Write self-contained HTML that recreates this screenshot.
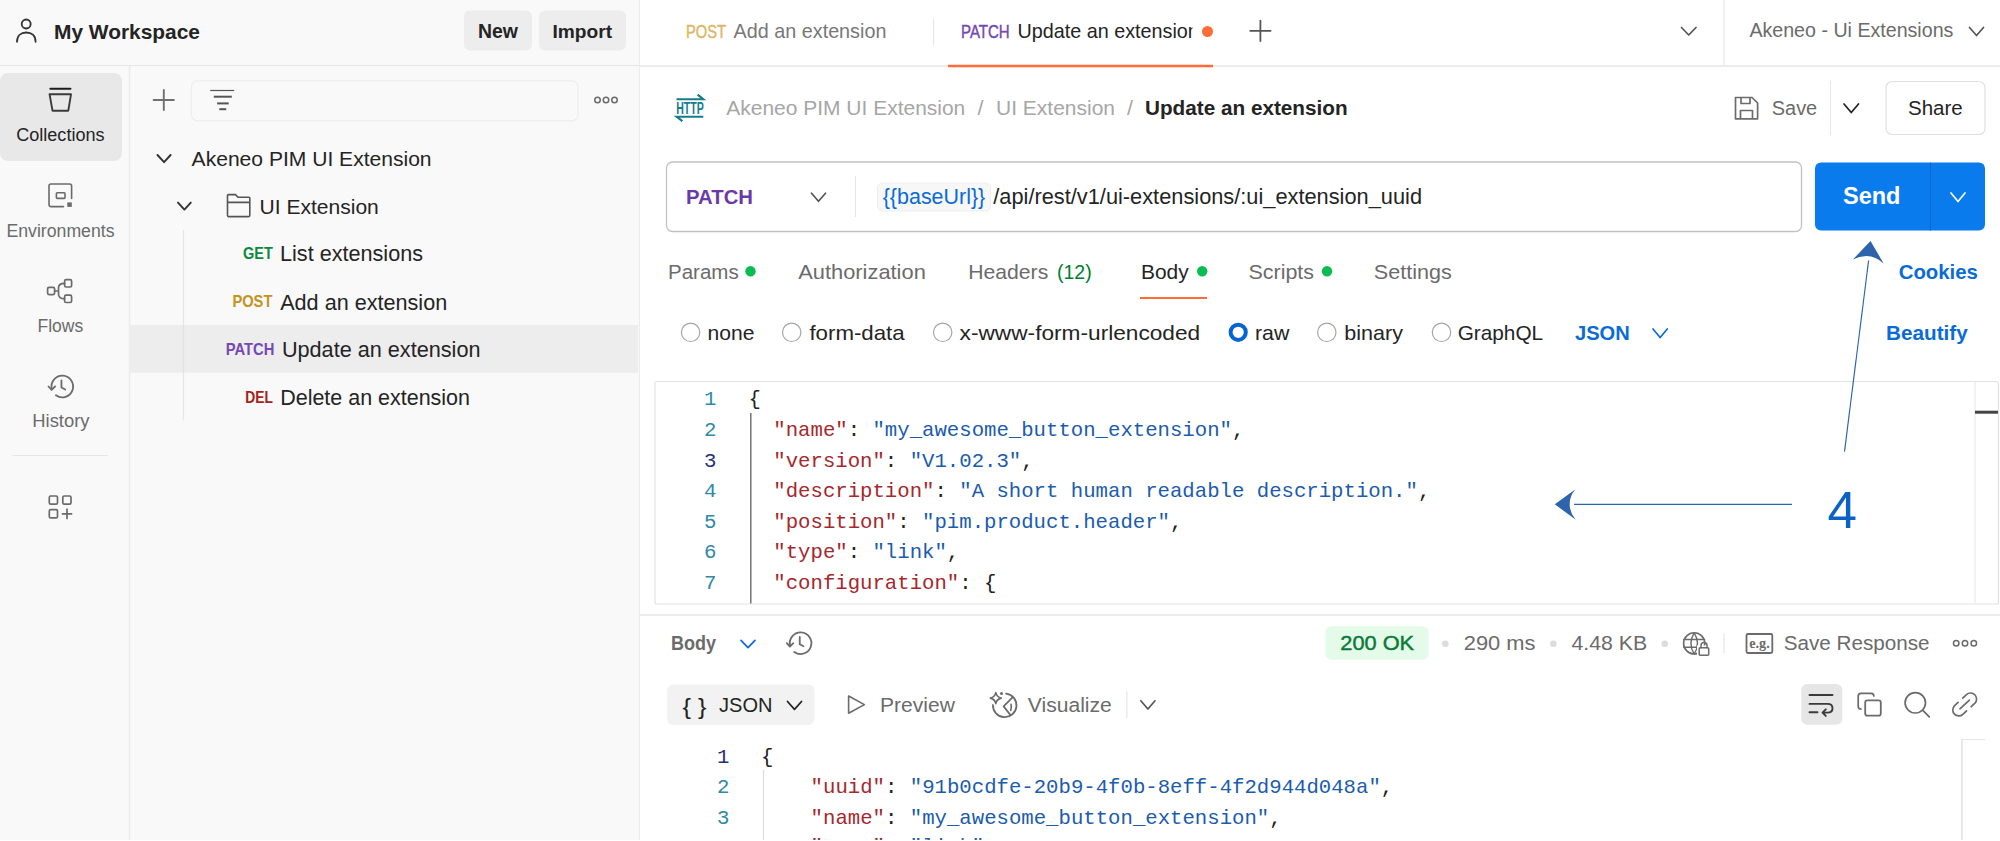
<!DOCTYPE html>
<html><head><meta charset="utf-8"><title>Postman</title><style>html,body{margin:0;padding:0;background:#fff;overflow:hidden;width:2000px;height:841px}svg{display:block;font-family:"Liberation Sans",sans-serif}</style></head><body>
<svg width="2000" height="841" viewBox="0 0 2000 841">
<rect x="0" y="0" width="2000" height="841" rx="0" fill="#ffffff"/>
<rect x="0" y="0" width="639" height="841" rx="0" fill="#f9f9f9"/>
<line x1="639.5" y1="0" x2="639.5" y2="841" stroke="#ececec" stroke-width="1" stroke-linecap="butt"/>
<line x1="0" y1="65.5" x2="639" y2="65.5" stroke="#e6e6e6" stroke-width="1" stroke-linecap="butt"/>
<line x1="640" y1="66" x2="2000" y2="66" stroke="#e6e6e6" stroke-width="1.5" stroke-linecap="butt"/>
<line x1="129.5" y1="66" x2="129.5" y2="841" stroke="#ececec" stroke-width="1.5" stroke-linecap="butt"/>
<circle cx="26.2" cy="24" r="4.5" stroke="#333333" stroke-width="1.8" fill="none"/>
<path d="M17 41.8 C17 35.5 21 32.5 26.2 32.5 C31.5 32.5 35.6 35.5 35.6 41.8" stroke="#333333" stroke-width="1.8" fill="none" stroke-linecap="round" stroke-linejoin="round" />
<text x="54" y="39.4" font-family="Liberation Sans" font-size="20.8" font-weight="700" fill="#242424" textLength="146" lengthAdjust="spacingAndGlyphs" >My Workspace</text>
<rect x="464" y="10.5" width="68" height="40" rx="6" fill="#ededed"/>
<text x="477.9" y="37.9" font-family="Liberation Sans" font-size="19.5" font-weight="700" fill="#242424" textLength="40" lengthAdjust="spacingAndGlyphs" >New</text>
<rect x="539" y="10.5" width="87" height="40" rx="6" fill="#ededed"/>
<text x="552.5" y="37.9" font-family="Liberation Sans" font-size="19" font-weight="700" fill="#242424" textLength="59.5" lengthAdjust="spacingAndGlyphs" >Import</text>
<rect x="0" y="73" width="122" height="88" rx="8" fill="#e8e8e8"/>
<line x1="50.4" y1="88.8" x2="70.4" y2="88.8" stroke="#1c1c1c" stroke-width="2.1" stroke-linecap="round"/>
<path d="M49.6 94.3 L71 94.3 L68.3 110.7 L52.5 110.7 Z" stroke="#3a3a3a" stroke-width="1.9" fill="none" stroke-linecap="round" stroke-linejoin="round" />
<text x="16.2" y="140.8" font-family="Liberation Sans" font-size="18" fill="#242424" textLength="88.4" lengthAdjust="spacingAndGlyphs" >Collections</text>
<path d="M71.6 198.5 L71.6 186 Q71.6 184 69.6 184 L51 184 Q49 184 49 186 L49 204.6 Q49 206.6 51 206.6 L63.5 206.6" stroke="#6b6b6b" stroke-width="1.6" fill="none" stroke-linecap="round" stroke-linejoin="round" />
<rect x="56.4" y="192.8" width="8.6" height="5.6" rx="0.8" fill="none" stroke="#6b6b6b" stroke-width="1.6"/>
<rect x="67.3" y="202.4" width="4.5" height="4.5" rx="0" fill="#6b6b6b"/>
<text x="6.5" y="236.5" font-family="Liberation Sans" font-size="18" fill="#6b6b6b" textLength="108" lengthAdjust="spacingAndGlyphs" >Environments</text>
<rect x="47.6" y="287.3" width="7" height="7.3" rx="1.5" fill="none" stroke="#6b6b6b" stroke-width="1.7"/>
<rect x="64.6" y="279.7" width="7" height="7.3" rx="1.5" fill="none" stroke="#6b6b6b" stroke-width="1.7"/>
<rect x="64.6" y="295.2" width="7" height="7.3" rx="1.5" fill="none" stroke="#6b6b6b" stroke-width="1.7"/>
<path d="M54.6 291 L57 291 M64.6 283.4 Q58.5 283.4 58.5 288 L58.5 294 Q58.5 298.8 64.6 298.8 M56 291 L58.5 291" stroke="#6b6b6b" stroke-width="1.7" fill="none" stroke-linecap="round" stroke-linejoin="round" />
<text x="37.5" y="332" font-family="Liberation Sans" font-size="18" fill="#6b6b6b" textLength="45.8" lengthAdjust="spacingAndGlyphs" >Flows</text>
<path d="M55.95 395.24 A10.8 10.8 0 1 0 51.82 389.11" stroke="#6b6b6b" stroke-width="1.8" fill="none" stroke-linecap="round" stroke-linejoin="round" />
<path d="M48.52 386.51 L51.62 389.91 L55.02 386.51" stroke="#6b6b6b" stroke-width="1.8" fill="none" stroke-linecap="round" stroke-linejoin="round" />
<path d="M61.45 380.30 L61.45 387.50 L65.20 389.50" stroke="#6b6b6b" stroke-width="1.8" fill="none" stroke-linecap="round" stroke-linejoin="round" />
<text x="32.3" y="427.3" font-family="Liberation Sans" font-size="18" fill="#6b6b6b" textLength="57.2" lengthAdjust="spacingAndGlyphs" >History</text>
<line x1="12.5" y1="455.5" x2="108" y2="455.5" stroke="#e6e6e6" stroke-width="1" stroke-linecap="butt"/>
<rect x="49.3" y="496" width="8.2" height="8.2" rx="1.4" fill="none" stroke="#6b6b6b" stroke-width="1.7"/>
<rect x="62.8" y="496" width="8.2" height="8.2" rx="1.4" fill="none" stroke="#6b6b6b" stroke-width="1.7"/>
<rect x="49.3" y="509.6" width="8.2" height="8.2" rx="1.4" fill="none" stroke="#6b6b6b" stroke-width="1.7"/>
<path d="M67 509.2 L67 518.4 M62.4 513.8 L71.6 513.8" stroke="#6b6b6b" stroke-width="1.7" fill="none" stroke-linecap="round" stroke-linejoin="round" />
<path d="M163.8 90 L163.8 110 M153.6 100 L173.9 100" stroke="#707070" stroke-width="1.9" fill="none" stroke-linecap="round" stroke-linejoin="round" />
<rect x="191.5" y="80.8" width="386.5" height="40" rx="6" fill="none" stroke="#ededed" stroke-width="1.2"/>
<line x1="210.2" y1="90.5" x2="234.2" y2="90.5" stroke="#555" stroke-width="1.2" stroke-linecap="butt"/>
<line x1="213.8" y1="96.7" x2="231.8" y2="96.7" stroke="#555" stroke-width="2" stroke-linecap="butt"/>
<line x1="217.1" y1="103.4" x2="228.7" y2="103.4" stroke="#555" stroke-width="2" stroke-linecap="butt"/>
<line x1="219.3" y1="109.2" x2="226.2" y2="109.2" stroke="#555" stroke-width="2" stroke-linecap="butt"/>
<circle cx="597.5" cy="100" r="2.75" stroke="#6b6b6b" stroke-width="1.5" fill="none"/>
<circle cx="606" cy="100" r="2.75" stroke="#6b6b6b" stroke-width="1.5" fill="none"/>
<circle cx="614.5" cy="100" r="2.75" stroke="#6b6b6b" stroke-width="1.5" fill="none"/>
<path d="M157.5 155 L164.05 162.2 L170.6 155" stroke="#333333" stroke-width="1.9" fill="none" stroke-linecap="round" stroke-linejoin="round" />
<text x="191.6" y="166" font-family="Liberation Sans" font-size="21" fill="#242424" textLength="240" lengthAdjust="spacingAndGlyphs" >Akeneo PIM UI Extension</text>
<path d="M178 202.6 L184.4 209.6 L190.8 202.6" stroke="#333333" stroke-width="1.9" fill="none" stroke-linecap="round" stroke-linejoin="round" />
<path d="M227.5 198 L227.5 195.5 Q227.5 194.6 228.5 194.6 L235.5 194.6 L238 197.2 L249 197.2 Q249.8 197.2 249.8 198 L249.8 215.6 Q249.8 216.6 248.8 216.6 L228.5 216.6 Q227.5 216.6 227.5 215.6 Z M227.5 202.4 L249.8 202.4" stroke="#555" stroke-width="1.6" fill="none" stroke-linecap="round" stroke-linejoin="round" />
<text x="259.5" y="213.8" font-family="Liberation Sans" font-size="21" fill="#242424" textLength="119.3" lengthAdjust="spacingAndGlyphs" >UI Extension</text>
<line x1="183.5" y1="230" x2="183.5" y2="420.5" stroke="#e6e6e6" stroke-width="1.2" stroke-linecap="butt"/>
<rect x="129" y="325" width="509" height="47.7" rx="0" fill="#ededed"/>
<line x1="183.5" y1="325" x2="183.5" y2="372.7" stroke="#e2e2e2" stroke-width="1.2" stroke-linecap="butt"/>
<text x="243" y="259" font-family="Liberation Sans" font-size="17" font-weight="700" fill="#0b8a3e" textLength="29.8" lengthAdjust="spacingAndGlyphs" >GET</text>
<text x="280" y="261.4" font-family="Liberation Sans" font-size="21.5" fill="#242424" textLength="143" lengthAdjust="spacingAndGlyphs" >List extensions</text>
<text x="232.4" y="307" font-family="Liberation Sans" font-size="17" font-weight="700" fill="#c4931c" textLength="40" lengthAdjust="spacingAndGlyphs" >POST</text>
<text x="280.2" y="309.6" font-family="Liberation Sans" font-size="21.5" fill="#242424" textLength="167" lengthAdjust="spacingAndGlyphs" >Add an extension</text>
<text x="225.8" y="354.9" font-family="Liberation Sans" font-size="17" font-weight="700" fill="#7548b4" textLength="48.6" lengthAdjust="spacingAndGlyphs" >PATCH</text>
<text x="281.9" y="356.9" font-family="Liberation Sans" font-size="21.5" fill="#242424" textLength="198.6" lengthAdjust="spacingAndGlyphs" >Update an extension</text>
<text x="245.3" y="402.7" font-family="Liberation Sans" font-size="17" font-weight="700" fill="#a3221b" textLength="27.6" lengthAdjust="spacingAndGlyphs" >DEL</text>
<text x="280.2" y="404.5" font-family="Liberation Sans" font-size="21.5" fill="#242424" textLength="189.8" lengthAdjust="spacingAndGlyphs" >Delete an extension</text>
<text x="686" y="37.9" font-family="Liberation Sans" font-size="18.6" stroke="#dcb664" stroke-width="0.45" fill="#dcb664" textLength="40" lengthAdjust="spacingAndGlyphs" >POST</text>
<text x="733.6" y="38" font-family="Liberation Sans" font-size="19.8" fill="#777777" textLength="152.8" lengthAdjust="spacingAndGlyphs" >Add an extension</text>
<line x1="933.6" y1="18.4" x2="933.6" y2="45.6" stroke="#e6e6e6" stroke-width="1" stroke-linecap="butt"/>
<text x="961" y="37.6" font-family="Liberation Sans" font-size="18.6" stroke="#7548b4" stroke-width="0.45" fill="#7548b4" textLength="48.7" lengthAdjust="spacingAndGlyphs" >PATCH</text>
<clipPath id="tabclip"><rect x="1000" y="0" width="192.5" height="60"/></clipPath>
<text x="1017.5" y="37.6" font-family="Liberation Sans" font-size="19.8" fill="#242424" textLength="181.3" lengthAdjust="spacingAndGlyphs" clip-path="url(#tabclip)">Update an extension</text>
<circle cx="1207.5" cy="31.5" r="5.5" fill="#ff6c37"/>
<path d="M1260.4 20.6 L1260.4 41 M1250.2 30.8 L1270.6 30.8" stroke="#555" stroke-width="1.8" fill="none" stroke-linecap="round" stroke-linejoin="round" />
<line x1="948" y1="66" x2="1213" y2="66" stroke="#ff6c37" stroke-width="2.4" stroke-linecap="butt"/>
<path d="M1681.5 27.5 L1688.75 35 L1696 27.5" stroke="#555" stroke-width="1.7" fill="none" stroke-linecap="round" stroke-linejoin="round" />
<line x1="1724" y1="0" x2="1724" y2="65.5" stroke="#e6e6e6" stroke-width="1" stroke-linecap="butt"/>
<text x="1749.4" y="37.3" font-family="Liberation Sans" font-size="19.6" fill="#6b6b6b" textLength="204" lengthAdjust="spacingAndGlyphs" >Akeneo - Ui Extensions</text>
<path d="M1969.5 27.5 L1976.5 35.5 L1983.5 27.5" stroke="#555" stroke-width="1.7" fill="none" stroke-linecap="round" stroke-linejoin="round" />
<path d="M676.5 99.2 L703.3 99.2 L697.6 94.6" stroke="#137d8b" stroke-width="2.1" fill="none" stroke-linejoin="miter"/>
<text x="676.2" y="113.7" font-family="Liberation Sans" font-size="15.6" font-weight="700" fill="#137d8b" textLength="27.6" lengthAdjust="spacingAndGlyphs" >HTTP</text>
<path d="M703.3 116.8 L676.7 116.8 L682.4 121.2" stroke="#137d8b" stroke-width="2.1" fill="none" stroke-linejoin="miter"/>
<text x="726.3" y="114.9" font-family="Liberation Sans" font-size="21" fill="#a6a6a6" textLength="239" lengthAdjust="spacingAndGlyphs" >Akeneo PIM UI Extension</text>
<text x="977.6" y="114.9" font-family="Liberation Sans" font-size="21" fill="#a6a6a6" textLength="6" lengthAdjust="spacingAndGlyphs" >/</text>
<text x="996" y="114.9" font-family="Liberation Sans" font-size="21" fill="#a6a6a6" textLength="119" lengthAdjust="spacingAndGlyphs" >UI Extension</text>
<text x="1127" y="114.9" font-family="Liberation Sans" font-size="21" fill="#a6a6a6" textLength="6" lengthAdjust="spacingAndGlyphs" >/</text>
<text x="1145" y="115" font-family="Liberation Sans" font-size="20.7" font-weight="700" fill="#242424" textLength="202.6" lengthAdjust="spacingAndGlyphs" >Update an extension</text>
<path d="M1735.5 97.5 L1752 97.5 L1757.6 103 L1757.6 118.8 L1735.5 118.8 Z M1741 97.5 L1741 103.5 L1750 103.5 L1750 97.5 M1740.5 118.8 L1740.5 110.5 L1752.5 110.5 L1752.5 118.8" stroke="#6b6b6b" stroke-width="1.7" fill="none" stroke-linecap="round" stroke-linejoin="round" />
<text x="1771.8" y="114.5" font-family="Liberation Sans" font-size="20" fill="#6b6b6b" textLength="45.4" lengthAdjust="spacingAndGlyphs" >Save</text>
<line x1="1830.5" y1="81" x2="1830.5" y2="135" stroke="#e6e6e6" stroke-width="1" stroke-linecap="butt"/>
<path d="M1844 104 L1851.25 112.5 L1858.5 104" stroke="#212121" stroke-width="1.7" fill="none" stroke-linecap="round" stroke-linejoin="round" />
<rect x="1886" y="81.5" width="99" height="53" rx="6" fill="#fff" stroke="#e0e0e0" stroke-width="1.2"/>
<text x="1908" y="114.5" font-family="Liberation Sans" font-size="20.5" fill="#242424" textLength="54.8" lengthAdjust="spacingAndGlyphs" >Share</text>
<rect x="666.5" y="162" width="1135" height="69.5" rx="6" fill="#fff" stroke="#c2c2c2" stroke-width="1.3"/>
<text x="686" y="203.8" font-family="Liberation Sans" font-size="20.3" font-weight="700" fill="#6a3aa8" textLength="67" lengthAdjust="spacingAndGlyphs" >PATCH</text>
<path d="M811.5 193.2 L818.5 201.3 L825.5 193.2" stroke="#555" stroke-width="1.7" fill="none" stroke-linecap="round" stroke-linejoin="round" />
<line x1="855.5" y1="176" x2="855.5" y2="217" stroke="#e6e6e6" stroke-width="1" stroke-linecap="butt"/>
<rect x="877.5" y="183" width="113" height="28" rx="5" fill="#f7f7f7" stroke="#ededed" stroke-width="1"/>
<text x="882.7" y="203.8" font-family="Liberation Sans" font-size="21.5" fill="#0a6bd8" textLength="102.6" lengthAdjust="spacingAndGlyphs" >{{baseUrl}}</text>
<text x="993.3" y="203.8" font-family="Liberation Sans" font-size="21.8" fill="#242424" textLength="428.7" lengthAdjust="spacingAndGlyphs" >/api/rest/v1/ui-extensions/:ui_extension_uuid</text>
<rect x="1815" y="162.6" width="170" height="68" rx="6" fill="#097bed"/>
<line x1="1930.5" y1="162.6" x2="1930.5" y2="230.6" stroke="#0868cc" stroke-width="1" stroke-linecap="butt"/>
<text x="1843" y="204.4" font-family="Liberation Sans" font-size="23.5" font-weight="700" fill="#ffffff" textLength="57.5" lengthAdjust="spacingAndGlyphs" >Send</text>
<path d="M1951 193 L1958.0 201.5 L1965 193" stroke="#ffffff" stroke-width="1.7" fill="none" stroke-linecap="round" stroke-linejoin="round" />
<text x="668" y="278.6" font-family="Liberation Sans" font-size="20.5" fill="#6b6b6b" textLength="70.7" lengthAdjust="spacingAndGlyphs" >Params</text>
<circle cx="750.5" cy="271.2" r="5.2" fill="#0cbb52"/>
<text x="798.2" y="278.6" font-family="Liberation Sans" font-size="21" fill="#6b6b6b" textLength="127.6" lengthAdjust="spacingAndGlyphs" >Authorization</text>
<text x="968.2" y="278.6" font-family="Liberation Sans" font-size="21" fill="#6b6b6b" textLength="80.1" lengthAdjust="spacingAndGlyphs" >Headers</text>
<text x="1057" y="278.6" font-family="Liberation Sans" font-size="20" fill="#007f31" textLength="34.7" lengthAdjust="spacingAndGlyphs" >(12)</text>
<text x="1141" y="278.6" font-family="Liberation Sans" font-size="21" fill="#242424" textLength="47.7" lengthAdjust="spacingAndGlyphs" >Body</text>
<circle cx="1202.2" cy="271.2" r="5.2" fill="#0cbb52"/>
<line x1="1140" y1="298" x2="1207" y2="298" stroke="#ff6c37" stroke-width="2" stroke-linecap="butt"/>
<text x="1248.5" y="278.6" font-family="Liberation Sans" font-size="21" fill="#6b6b6b" textLength="65.5" lengthAdjust="spacingAndGlyphs" >Scripts</text>
<circle cx="1327" cy="271.2" r="5.2" fill="#0cbb52"/>
<text x="1373.8" y="278.6" font-family="Liberation Sans" font-size="21" fill="#6b6b6b" textLength="78" lengthAdjust="spacingAndGlyphs" >Settings</text>
<text x="1898.7" y="278.7" font-family="Liberation Sans" font-size="21" font-weight="700" fill="#0a6bd8" textLength="79.2" lengthAdjust="spacingAndGlyphs" >Cookies</text>
<circle cx="690.6" cy="332.3" r="9.2" stroke="#a6a6a6" stroke-width="1.2" fill="#fff"/>
<circle cx="791.7" cy="332.3" r="9.2" stroke="#a6a6a6" stroke-width="1.2" fill="#fff"/>
<circle cx="942.7" cy="332.3" r="9.2" stroke="#a6a6a6" stroke-width="1.2" fill="#fff"/>
<circle cx="1326.8" cy="332.3" r="9.2" stroke="#a6a6a6" stroke-width="1.2" fill="#fff"/>
<circle cx="1441.5" cy="332.3" r="9.2" stroke="#a6a6a6" stroke-width="1.2" fill="#fff"/>
<circle cx="1238.2" cy="332.3" r="7.6" stroke="#0265d2" stroke-width="4" fill="#fff"/>
<text x="707.6" y="340" font-family="Liberation Sans" font-size="21" fill="#242424" textLength="46.9" lengthAdjust="spacingAndGlyphs" >none</text>
<text x="809.4" y="340" font-family="Liberation Sans" font-size="21" fill="#242424" textLength="95.3" lengthAdjust="spacingAndGlyphs" >form-data</text>
<text x="959.6" y="340" font-family="Liberation Sans" font-size="21" fill="#242424" textLength="240.6" lengthAdjust="spacingAndGlyphs" >x-www-form-urlencoded</text>
<text x="1255" y="340" font-family="Liberation Sans" font-size="21" fill="#242424" textLength="34.4" lengthAdjust="spacingAndGlyphs" >raw</text>
<text x="1344.3" y="340" font-family="Liberation Sans" font-size="21" fill="#242424" textLength="58.7" lengthAdjust="spacingAndGlyphs" >binary</text>
<text x="1457.7" y="340" font-family="Liberation Sans" font-size="21" fill="#242424" textLength="85.4" lengthAdjust="spacingAndGlyphs" >GraphQL</text>
<text x="1575" y="340" font-family="Liberation Sans" font-size="21" font-weight="700" fill="#0a6bd8" textLength="54.8" lengthAdjust="spacingAndGlyphs" >JSON</text>
<path d="M1653 329 L1660.15 337.5 L1667.3 329" stroke="#0a6bd8" stroke-width="1.7" fill="none" stroke-linecap="round" stroke-linejoin="round" />
<text x="1886" y="339.9" font-family="Liberation Sans" font-size="21" font-weight="700" fill="#0a6bd8" textLength="81.7" lengthAdjust="spacingAndGlyphs" >Beautify</text>
<rect x="655" y="381.5" width="1343.5" height="222.5" rx="2" fill="#fff" stroke="#e3e3e3" stroke-width="1.2"/>
<line x1="1975" y1="382" x2="1975" y2="603.5" stroke="#e6e6e6" stroke-width="1" stroke-linecap="butt"/>
<line x1="1975" y1="412.2" x2="1998" y2="412.2" stroke="#444" stroke-width="3" stroke-linecap="butt"/>
<text x="716.5" y="405.3" text-anchor="end" font-family="Liberation Mono" font-size="20.66" fill="#2e8aa6">1</text>
<text x="748.5" y="405.3" font-family="Liberation Mono" font-size="20.66" xml:space="preserve"><tspan fill="#212121">{</tspan></text>
<text x="716.5" y="435.93" text-anchor="end" font-family="Liberation Mono" font-size="20.66" fill="#2e8aa6">2</text>
<text x="748.5" y="435.93" font-family="Liberation Mono" font-size="20.66" xml:space="preserve"><tspan fill="#212121">  </tspan><tspan fill="#a6282d">&quot;name&quot;</tspan><tspan fill="#212121">: </tspan><tspan fill="#1b5cae">&quot;my_awesome_button_extension&quot;</tspan><tspan fill="#212121">,</tspan></text>
<text x="716.5" y="466.56" text-anchor="end" font-family="Liberation Mono" font-size="20.66" fill="#27307a">3</text>
<text x="748.5" y="466.56" font-family="Liberation Mono" font-size="20.66" xml:space="preserve"><tspan fill="#212121">  </tspan><tspan fill="#a6282d">&quot;version&quot;</tspan><tspan fill="#212121">: </tspan><tspan fill="#1b5cae">&quot;V1.02.3&quot;</tspan><tspan fill="#212121">,</tspan></text>
<text x="716.5" y="497.19" text-anchor="end" font-family="Liberation Mono" font-size="20.66" fill="#2e8aa6">4</text>
<text x="748.5" y="497.19" font-family="Liberation Mono" font-size="20.66" xml:space="preserve"><tspan fill="#212121">  </tspan><tspan fill="#a6282d">&quot;description&quot;</tspan><tspan fill="#212121">: </tspan><tspan fill="#1b5cae">&quot;A short human readable description.&quot;</tspan><tspan fill="#212121">,</tspan></text>
<text x="716.5" y="527.82" text-anchor="end" font-family="Liberation Mono" font-size="20.66" fill="#2e8aa6">5</text>
<text x="748.5" y="527.82" font-family="Liberation Mono" font-size="20.66" xml:space="preserve"><tspan fill="#212121">  </tspan><tspan fill="#a6282d">&quot;position&quot;</tspan><tspan fill="#212121">: </tspan><tspan fill="#1b5cae">&quot;pim.product.header&quot;</tspan><tspan fill="#212121">,</tspan></text>
<text x="716.5" y="558.45" text-anchor="end" font-family="Liberation Mono" font-size="20.66" fill="#2e8aa6">6</text>
<text x="748.5" y="558.45" font-family="Liberation Mono" font-size="20.66" xml:space="preserve"><tspan fill="#212121">  </tspan><tspan fill="#a6282d">&quot;type&quot;</tspan><tspan fill="#212121">: </tspan><tspan fill="#1b5cae">&quot;link&quot;</tspan><tspan fill="#212121">,</tspan></text>
<text x="716.5" y="589.08" text-anchor="end" font-family="Liberation Mono" font-size="20.66" fill="#2e8aa6">7</text>
<text x="748.5" y="589.08" font-family="Liberation Mono" font-size="20.66" xml:space="preserve"><tspan fill="#212121">  </tspan><tspan fill="#a6282d">&quot;configuration&quot;</tspan><tspan fill="#212121">: {</tspan></text>
<line x1="750.8" y1="413" x2="750.8" y2="603.5" stroke="#6b6b6b" stroke-width="1.4" stroke-linecap="butt"/>
<line x1="1844.5" y1="451.6" x2="1868.6" y2="260.5" stroke="#2d64ab" stroke-width="1.15" stroke-linecap="butt"/>
<path d="M1870.5 240.9 L1883.6 263.4 Q1876 256.2 1866.4 255.9 Q1859 256.2 1852.9 259.5 Z" fill="#2d64ab"/>
<line x1="1574" y1="504.3" x2="1792" y2="504.3" stroke="#2d64ab" stroke-width="1.15" stroke-linecap="butt"/>
<path d="M1554.8 504.3 L1575.5 489.2 Q1569.5 496 1569.7 504.3 Q1569.5 512 1575.5 519.6 Z" fill="#2d64ab"/>
<text x="1827.5" y="528.2" font-family="Liberation Sans" font-size="51" fill="#0b62c6" textLength="29.5" lengthAdjust="spacingAndGlyphs" >4</text>
<line x1="640" y1="615" x2="2000" y2="615" stroke="#e6e6e6" stroke-width="1.6" stroke-linecap="butt"/>
<text x="671" y="650.4" font-family="Liberation Sans" font-size="19.5" font-weight="700" fill="#6b6b6b" textLength="45" lengthAdjust="spacingAndGlyphs" >Body</text>
<path d="M741 640.3 L748.0 647.6 L755 640.3" stroke="#0a6bd8" stroke-width="1.7" fill="none" stroke-linecap="round" stroke-linejoin="round" />
<path d="M794.25 651.94 A10.8 10.8 0 1 0 790.12 645.81" stroke="#6b6b6b" stroke-width="1.8" fill="none" stroke-linecap="round" stroke-linejoin="round" />
<path d="M786.82 643.21 L789.92 646.61 L793.32 643.21" stroke="#6b6b6b" stroke-width="1.8" fill="none" stroke-linecap="round" stroke-linejoin="round" />
<path d="M799.75 637.00 L799.75 644.20 L803.50 646.20" stroke="#6b6b6b" stroke-width="1.8" fill="none" stroke-linecap="round" stroke-linejoin="round" />
<rect x="1325.4" y="626.3" width="103.1" height="33.4" rx="6" fill="#e5fbea"/>
<text x="1340.3" y="649.9" font-family="Liberation Sans" font-size="20.5" stroke="#0b7a38" stroke-width="0.45" fill="#0b7a38" textLength="73.8" lengthAdjust="spacingAndGlyphs" >200 OK</text>
<circle cx="1445.3" cy="643.7" r="3.3" fill="#dcdcdc"/>
<circle cx="1553.3" cy="643.7" r="3.3" fill="#dcdcdc"/>
<circle cx="1664.7" cy="643.7" r="3.3" fill="#dcdcdc"/>
<text x="1463.75" y="649.9" font-family="Liberation Sans" font-size="20.5" fill="#6b6b6b" textLength="71.75" lengthAdjust="spacingAndGlyphs" >290 ms</text>
<text x="1571.4" y="649.9" font-family="Liberation Sans" font-size="20.5" fill="#6b6b6b" textLength="75.8" lengthAdjust="spacingAndGlyphs" >4.48 KB</text>
<circle cx="1694.2" cy="643.4" r="10.6" stroke="#6b6b6b" stroke-width="1.6" fill="none"/>
<path d="M1694.2 632.8 Q1687.5 643.4 1694.2 654 M1694.2 632.8 Q1700.9 643.4 1694.2 654 M1683.8 639.5 L1704.6 639.5 M1683.8 647.3 L1700 647.3" stroke="#6b6b6b" stroke-width="1.4" fill="none" stroke-linecap="round" stroke-linejoin="round" />
<rect x="1697" y="645.5" width="13.5" height="10" rx="0" fill="#fff"/>
<rect x="1699.2" y="647.8" width="9.5" height="7.4" rx="1" fill="none" stroke="#6b6b6b" stroke-width="1.5"/>
<path d="M1701 647.8 L1701 645.3 Q1701 642.5 1704 642.5 Q1707 642.5 1707 645.3 L1707 647.8" stroke="#6b6b6b" stroke-width="1.5" fill="none" stroke-linecap="round" stroke-linejoin="round" />
<line x1="1724" y1="633.8" x2="1724" y2="653.2" stroke="#e6e6e6" stroke-width="1.3" stroke-linecap="butt"/>
<rect x="1746.5" y="634" width="25.8" height="19" rx="1.5" fill="none" stroke="#6b6b6b" stroke-width="1.8"/>
<text x="1749.2" y="647.6" font-family="Liberation Serif" font-size="14" font-weight="700" fill="#6b6b6b" textLength="20.5" lengthAdjust="spacingAndGlyphs" >e.g.</text>
<text x="1783.7" y="650.25" font-family="Liberation Sans" font-size="20.5" fill="#6b6b6b" textLength="145.8" lengthAdjust="spacingAndGlyphs" >Save Response</text>
<circle cx="1956.2" cy="643.2" r="2.75" stroke="#6b6b6b" stroke-width="1.5" fill="none"/>
<circle cx="1965" cy="643.2" r="2.75" stroke="#6b6b6b" stroke-width="1.5" fill="none"/>
<circle cx="1973.8" cy="643.2" r="2.75" stroke="#6b6b6b" stroke-width="1.5" fill="none"/>
<rect x="667.2" y="684.4" width="147.3" height="40.7" rx="6" fill="#f2f2f2"/>
<text x="682.4" y="713.5" font-family="Liberation Sans" font-size="22" fill="#242424" textLength="24" lengthAdjust="spacingAndGlyphs" >{ }</text>
<text x="719.1" y="711.5" font-family="Liberation Sans" font-size="20.5" fill="#242424" textLength="53.4" lengthAdjust="spacingAndGlyphs" >JSON</text>
<path d="M787.5 701.5 L794.5 709.4 L801.5 701.5" stroke="#212121" stroke-width="1.7" fill="none" stroke-linecap="round" stroke-linejoin="round" />
<path d="M848.6 696 L864.4 704.6 L848.6 713.2 Z" stroke="#6b6b6b" stroke-width="1.6" fill="none" stroke-linecap="round" stroke-linejoin="round" />
<text x="880.1" y="711.5" font-family="Liberation Sans" font-size="20.5" fill="#6b6b6b" textLength="74.8" lengthAdjust="spacingAndGlyphs" >Preview</text>
<path d="M1006.1 693.6 A11.8 11.8 0 1 1 992.9 705" stroke="#6b6b6b" stroke-width="1.75" fill="none" stroke-linecap="round" stroke-linejoin="round" />
<path d="M1012.3 697.7 L1003.6 706.4 L1010.1 714.6" stroke="#6b6b6b" stroke-width="1.75" fill="none" stroke-linecap="round" stroke-linejoin="round" />
<path d="M1011 704.2 Q1011.6 707.2 1010.8 710.4" stroke="#6b6b6b" stroke-width="1.6" fill="none" stroke-linecap="round" stroke-linejoin="round" />
<path d="M995.8 692.6 Q996.8 697.1 1001.2 698.1 Q996.8 699.1 995.8 703.6 Q994.8 699.1 990.4 698.1 Q994.8 697.1 995.8 692.6 Z" stroke="#6b6b6b" stroke-width="1.6" fill="none" stroke-linecap="round" stroke-linejoin="round" />
<circle cx="1001.5" cy="693.6" r="1.5" fill="#6b6b6b"/>
<text x="1027.8" y="711.5" font-family="Liberation Sans" font-size="20.5" fill="#6b6b6b" textLength="84" lengthAdjust="spacingAndGlyphs" >Visualize</text>
<line x1="1126.8" y1="691.2" x2="1126.8" y2="718" stroke="#e6e6e6" stroke-width="1.2" stroke-linecap="butt"/>
<path d="M1140.8 700.8 L1147.9 709 L1155 700.8" stroke="#555" stroke-width="1.7" fill="none" stroke-linecap="round" stroke-linejoin="round" />
<rect x="1801.3" y="683.9" width="41" height="40.8" rx="6" fill="#e6e6e6"/>
<path d="M1809.5 695 L1832.5 695 M1809.5 703.9 L1827.5 703.9 Q1832.5 703.9 1832.5 708.3 Q1832.5 712.6 1827.5 712.6 L1822.8 712.6 M1825.8 709.3 L1822.5 712.6 L1825.8 715.9 M1809.5 712.3 L1817.5 712.3" stroke="#3a3a3a" stroke-width="1.9" fill="none" stroke-linecap="round" stroke-linejoin="round" />
<path d="M1861 709 Q1858.2 709 1858.2 706.2 L1858.2 696.2 Q1858.2 693.4 1861 693.4 L1871 693.4 Q1873.8 693.4 1873.8 696" stroke="#6b6b6b" stroke-width="1.7" fill="none" stroke-linecap="round" stroke-linejoin="round" />
<rect x="1865.2" y="700.3" width="15.6" height="15.4" rx="2.2" fill="none" stroke="#6b6b6b" stroke-width="1.8"/>
<circle cx="1915.3" cy="702.8" r="10.2" stroke="#6b6b6b" stroke-width="1.7" fill="none"/>
<line x1="1922.8" y1="710.4" x2="1929.3" y2="716.8" stroke="#6b6b6b" stroke-width="1.8" stroke-linecap="round"/>
<path d="M1962.75 698.1 L1966.46 694.61 A6 6 0 0 1 1974.94 703.09 L1971.2 706.6 M1966.55 710.8 L1962.84 714.29 A6 6 0 0 1 1954.36 705.81 L1958.1 702.3 M1959.9 708.8 L1969.4 700.1" stroke="#6b6b6b" stroke-width="1.7" fill="none" stroke-linecap="round" stroke-linejoin="round" />
<line x1="1962" y1="739.5" x2="1985" y2="739.5" stroke="#e6e6e6" stroke-width="1" stroke-linecap="butt"/>
<line x1="1962" y1="739" x2="1962" y2="840" stroke="#e6e6e6" stroke-width="1.8" stroke-linecap="butt"/>
<text x="729.5" y="762.7" text-anchor="end" font-family="Liberation Mono" font-size="20.66" fill="#27307a">1</text>
<text x="761" y="762.7" font-family="Liberation Mono" font-size="20.66" xml:space="preserve"><tspan fill="#212121">{</tspan></text>
<text x="729.5" y="793.33" text-anchor="end" font-family="Liberation Mono" font-size="20.66" fill="#2e8aa6">2</text>
<text x="761" y="793.33" font-family="Liberation Mono" font-size="20.66" xml:space="preserve"><tspan fill="#212121">    </tspan><tspan fill="#a6282d">&quot;uuid&quot;</tspan><tspan fill="#212121">: </tspan><tspan fill="#1b5cae">&quot;91b0cdfe-20b9-4f0b-8eff-4f2d944d048a&quot;</tspan><tspan fill="#212121">,</tspan></text>
<text x="729.5" y="823.96" text-anchor="end" font-family="Liberation Mono" font-size="20.66" fill="#2e8aa6">3</text>
<text x="761" y="823.96" font-family="Liberation Mono" font-size="20.66" xml:space="preserve"><tspan fill="#212121">    </tspan><tspan fill="#a6282d">&quot;name&quot;</tspan><tspan fill="#212121">: </tspan><tspan fill="#1b5cae">&quot;my_awesome_button_extension&quot;</tspan><tspan fill="#212121">,</tspan></text>
<text x="729.5" y="852.59" text-anchor="end" font-family="Liberation Mono" font-size="20.66" fill="#2e8aa6">4</text>
<text x="761" y="852.59" font-family="Liberation Mono" font-size="20.66" xml:space="preserve"><tspan fill="#212121">    </tspan><tspan fill="#a6282d">&quot;type&quot;</tspan><tspan fill="#212121">: </tspan><tspan fill="#1b5cae">&quot;link&quot;</tspan><tspan fill="#212121">,</tspan></text>
<line x1="763.5" y1="769.8" x2="763.5" y2="841" stroke="#dcdcdc" stroke-width="1.2" stroke-linecap="butt"/>
<rect x="0" y="840" width="2000" height="1" rx="0" fill="#ffffff"/>
</svg>
</body></html>
